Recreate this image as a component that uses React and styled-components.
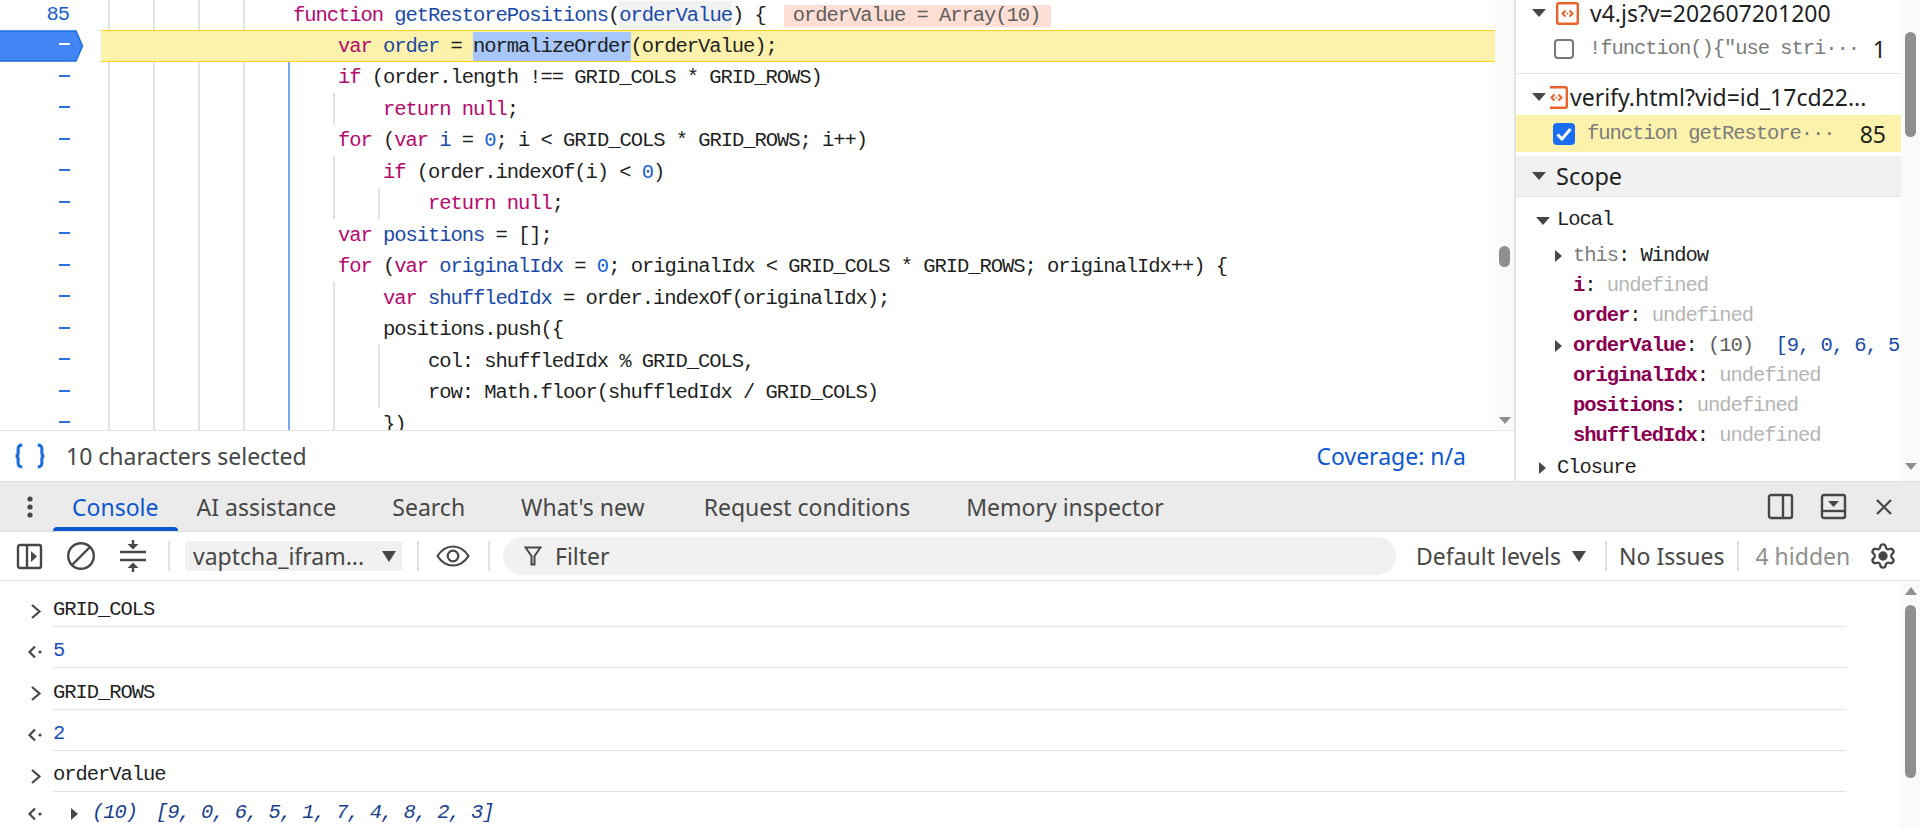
import React from "react";
import styled, { createGlobalStyle } from "styled-components";

const SANS = `"Noto Sans", "Open Sans", sans-serif`;
const MONO_FONT = `font: 20.5px/1 "Liberation Mono", monospace; letter-spacing: -1.05px;`;

const Global = createGlobalStyle`
  html, body { margin: 0; padding: 0; background: #fff; overflow: hidden; }
  * { box-sizing: border-box; }
`;

const Page = styled.div`
  width: 1920px; height: 828px; display: flex; flex-direction: column; overflow: hidden;
  font-family: ${SANS}; color: #1f1f1f; background: #fff;
`;
const Top = styled.div`display: flex; height: 481px; flex: none;`;
const SourcePane = styled.div`
  width: 1516px; flex: none; display: flex; flex-direction: column;
  border-right: 2px solid #e3e3e3;
`;
const CodeArea = styled.div`
  height: 431px; flex: none; display: flex; overflow: hidden; border-bottom: 1.5px solid #e3e3e3;
`;
const CodeList = styled.div`flex: 1; min-width: 0; overflow: hidden;`;
const Row = styled.div`
  display: flex; height: ${p => p.$first ? 30 : 31.5}px; white-space: pre;
  ${MONO_FONT} color: #1f1f1f;
`;
const Gutter = styled.div`
  position: relative; width: 101px; flex: none; display: flex; align-items: center; justify-content: flex-end;
  padding-right: 32px; color: #1a5fd0;
`;
const Dash = styled.span`
  position: relative; width: 11px; height: 2px; background: ${p => p.$on ? "#fff" : "#2b6fe0"};
  margin-top: -3px; margin-right: -1px;
`;
const Marker = styled.svg`position: absolute; left: 0; top: -0.5px;`;
const LineBody = styled.div`
  flex: 1; display: flex; align-items: stretch; padding-left: 7px; min-width: 0;
  ${p => p.$current && `
    background: #fdf2ab; border-top: 1.5px solid #fcd116; border-bottom: 1.5px solid #fcd116;
  `}
`;
const Indent = styled.span`
  width: 45px; flex: none; border-left: 2px solid ${p => p.$hidden ? "transparent" : p.$blue ? "#7ba7f7" : "#e3e3e3"};
`;
const Code = styled.span`align-self: center; padding: 2px 0 0 5px;`;
const Kw = styled.span`color: #b5086e;`;
const Def = styled.span`color: #1a4aa8;`;
const Num = styled.span`color: #1a62d6;`;
const ParamMark = styled.span`background: #f1f1f1; color: #1a4aa8; padding: 3px 0;`;
const Sel = styled.span`background: #a8c7fa; padding: 3px 0;`;
const InlineValue = styled.span`
  background: #ffdfd5; color: #5e5e5e; margin-left: 18px; padding: 2px 11px 2px 9px; display: inline-block; line-height: 18px;
`;

const ScrollTrack = styled.div`
  width: 19px; flex: none; background: #fafafa; display: flex; flex-direction: column; align-items: center;
`;
const Thumb = styled.div`
  width: 11px; height: ${p => p.$h}px; margin-top: ${p => p.$top}px; border-radius: 6px; background: #8f8f8f; flex: none;
`;
const DownArrow = styled.div`
  width: 0; height: 0; border-left: 6px solid transparent; border-right: 6px solid transparent;
  border-top: 7px solid #8f8f8f; margin-top: ${p => p.$top}px; flex: none;
`;
const UpArrow = styled.div`
  width: 0; height: 0; border-left: 6px solid transparent; border-right: 6px solid transparent;
  border-bottom: 8px solid #8f8f8f; margin-top: ${p => p.$top}px; flex: none;
`;

const StatusBar = styled.div`
  height: 50px; display: flex; align-items: center; padding: 0 48px 0 14px; font-size: 23px; color: #474747;
`;
const StatusText = styled.span`margin-left: 20px;`;
const CoverageLink = styled.span`margin-left: auto; color: #0b57d0;`;

const Sidebar = styled.div`flex: 1; min-width: 0; display: flex; overflow: hidden;`;
const SideBody = styled.div`flex: 1; min-width: 0; overflow: hidden;`;
const FileGroup = styled.div`
  ${p => p.$divided && `padding-bottom: 6px; border-bottom: 1.5px solid #e3e3e3;`}
`;
const FileRow = styled.div`
  display: flex; align-items: center; height: ${p => p.$h}px; padding: ${p => p.$pt || 0}px 0 ${p => p.$pb || 0}px 16px;
  font-size: 23px; line-height: 24px; color: #1f1f1f; white-space: nowrap;
`;
const FileName = styled.span`margin-left: ${p => p.$gap}px;`;
const TriGap = styled.span`width: ${p => p.$w}px; flex: none;`;
const Tri = styled.span`
  display: inline-block; flex: none; width: 0; height: 0;
  ${p => p.$right
    ? `border-top: 6px solid transparent; border-bottom: 6px solid transparent; border-left: 7px solid #474747;`
    : `border-left: 7px solid transparent; border-right: 7px solid transparent; border-top: ${p.$tall ? 11 : 8}px solid #474747;`}
`;
const BpRow = styled.div`
  display: flex; align-items: center; height: 37px; padding: 0 15px 0 ${p => p.$pl}px;
  background: ${p => p.$hit ? "#fdf2ab" : "transparent"};
`;
const Check = styled.span`
  width: ${p => p.$on ? 22 : 20}px; height: ${p => p.$on ? 22 : 20}px; flex: none; border-radius: 4px;
  border: ${p => p.$on ? "none" : "2px solid #777"}; background: ${p => p.$on ? "#1a6cf0" : "#fff"};
  display: flex; align-items: center; justify-content: center;
`;
const BpCode = styled.span`
  ${MONO_FONT} color: #7c7c7c; margin-left: ${p => p.$gap}px; flex: 1; white-space: pre; padding-top: 2px;
`;
const BpLine = styled.span`font-size: 23px; color: #1f1f1f;`;
const ScopeHeader = styled.div`
  margin-top: 4px; height: 41px; background: #f1f1f1; border-bottom: 1.5px solid #e3e3e3;
  display: flex; align-items: center; padding-left: 16px; font-size: 23.5px;
`;
const ScopeTitle = styled.span`margin-left: 10px;`;
const TreeHead = styled.div`
  display: flex; align-items: center; height: ${p => p.$h}px; padding-left: ${p => p.$pl}px;
  padding-top: ${p => p.$pt || 0}px; padding-bottom: ${p => p.$pb || 0}px;
  ${MONO_FONT} color: #1f1f1f; white-space: pre;
`;
const TreeLabel = styled.span`margin-left: ${p => p.$gap}px;`;
const TreeRow = styled.div`
  display: flex; align-items: center; height: 30px; padding-left: ${p => p.$arrow ? 0 : 57}px; padding-top: 2px;
  ${MONO_FONT} white-space: pre; color: #1f1f1f;
`;
const ArrowSlot = styled.span`width: 57px; flex: none; display: flex; justify-content: flex-end; padding-right: 11px;`;
const Prop = styled.span`color: ${p => p.$proto ? "#7c7c7c" : "#8a0050"}; font-weight: ${p => p.$proto ? 400 : 700};`;
const Muted = styled.span`color: #b5b5b5;`;
const Clip = styled.span`color: #5e5e5e;`;

const Drawer = styled.div`flex: 1; min-height: 0; display: flex; flex-direction: column; border-top: 1.5px solid #dedede;`;
const TabBar = styled.div`
  height: 50px; flex: none; background: #ebebeb; border-bottom: 1.5px solid #e0e0e0; display: flex; align-items: stretch; padding-left: 21px;
  font-size: 23px; color: #474747;
`;
const DotsBtn = styled.span`width: 18px; flex: none; display: flex; align-items: center; justify-content: center;`;
const Tab = styled.span`
  position: relative; display: flex; align-items: center; margin-left: ${p => p.$ml}px; white-space: nowrap;
  color: ${p => p.$on ? "#0b57d0" : "#474747"};
  ${p => p.$on && `&::after { content: ""; position: absolute; left: -19px; right: -19px; bottom: 0; height: 4px; background: #0b57d0; border-radius: 4px 4px 0 0; }`}
`;
const TabTools = styled.div`margin-left: auto; display: flex; align-items: center; gap: 26px; padding-right: 26px;`;
const Toolbar = styled.div`
  height: 49px; flex: none; display: flex; align-items: center; border-bottom: 1.5px solid #e3e3e3; padding-left: 16px;
  font-size: 23px; color: #474747; white-space: nowrap;
`;
const ToolIcon = styled.svg`flex: none; margin-left: ${p => p.$ml || 0}px;`;
const Sep = styled.span`width: 2px; height: 30px; background: #e3e3e3; flex: none; margin: 0 ${p => p.$r}px 0 ${p => p.$l}px;`;
const ContextSelect = styled.div`
  width: 217px; height: 30px; background: #f1f1f1; border-radius: 4px; display: flex; align-items: center; justify-content: space-between;
  padding: 0 6px 0 8px; flex: none;
`;
const FilterPill = styled.div`
  width: 893px; height: 38px; background: #f1f1f1; border-radius: 19px; display: flex; align-items: center; padding-left: 21px; flex: none;
`;
const FilterText = styled.span`margin-left: 13px;`;
const Levels = styled.span`margin-left: 20px; display: flex; align-items: center; gap: 11px;`;
const Hidden = styled.span`color: #8f8f8f;`;
const ConsoleArea = styled.div`flex: 1; min-height: 0; display: flex; overflow: hidden;`;
const ConsoleList = styled.div`width: 1846px; flex: none; overflow: hidden;`;
const ConsoleSpacer = styled.div`flex: 1;`;
const ConsoleRow = styled.div`
  display: flex; height: ${p => p.$h}px; ${MONO_FONT} white-space: pre;
`;
const ConsoleIcon = styled.span`
  width: 53px; flex: none; display: flex; align-items: center; padding-left: 30px; padding-top: ${p => p.$pt}px;
`;
const ConsoleBody = styled.div`
  flex: 1; display: flex; align-items: center; padding-top: ${p => p.$pt}px;
  border-bottom: ${p => p.$last ? "none" : "1.5px solid #e3e3e3"}; color: ${p => p.$value ? "#1a4fb5" : "#1f1f1f"};
`;
const ObjTri = styled.span`margin: 0 14px 0 18px; display: flex;`;
const ItalicBlue = styled.span`font-style: italic; color: #1a3f8f;`;
const ArrayText = styled.span`font-style: italic; color: #1a3f8f; margin-left: 19px;`;

const FileIcon = ({ clip }) => (
  <svg width={clip ? 18 : 23} height="23" viewBox={clip ? "5 0 18 23" : "0 0 23 23"} style={{ flex: "none" }}>
    <rect x="1.2" y="1.2" width="20.6" height="20.6" rx="1.5" fill="#fff" stroke="#e8622a" strokeWidth="2.4" />
    <path d="M9.5 8.5 6.5 11.5l3 3M13.5 8.5l3 3-3 3" fill="none" stroke="#e8622a" strokeWidth="2" />
    <circle cx="11.5" cy="11.5" r="1" fill="#e8622a" />
  </svg>
);
const Prompt = () => (
  <svg width="12" height="17" viewBox="0 0 12 17"><path d="M2 2l7.5 6.500L2 15" fill="none" stroke="#474747" strokeWidth="2.200" /></svg>
);
const Result = () => (
  <svg width="16" height="16" viewBox="0 0 16 16" style={{ marginLeft: -3 }}>
    <path d="M8 2.500 2.500 8 8 13.500" fill="none" stroke="#474747" strokeWidth="2.200" />
    <circle cx="13" cy="8" r="1.600" fill="#474747" />
  </svg>
);

const kinds = { k: Kw, d: Def, n: Num, p: ParamMark, s: Sel };
const T = ({ c }) => {
  const parts = c.split(/(\{\{\w:.*?\}\})/g);
  return parts.map((part, i) => {
    const m = part.match(/^\{\{(\w):(.*)\}\}$/);
    if (!m) return <React.Fragment key={i}>{part}</React.Fragment>;
    const C = kinds[m[1]];
    return <C key={i}>{m[2]}</C>;
  });
};

const lines = [
  { d: 4, c: "{{k:function}} {{d:getRestorePositions}}({{p:orderValue}}) {", num: "85" },
  { d: 5, c: "{{k:var}} {{d:order}} = {{s:normalizeOrder}}(orderValue);", cur: true },
  { d: 5, c: "{{k:if}} (order.length !== GRID_COLS * GRID_ROWS)" },
  { d: 6, c: "{{k:return}} {{k:null}};" },
  { d: 5, c: "{{k:for}} ({{k:var}} {{d:i}} = {{n:0}}; i < GRID_COLS * GRID_ROWS; i++)" },
  { d: 6, c: "{{k:if}} (order.indexOf(i) < {{n:0}})" },
  { d: 7, c: "{{k:return}} {{k:null}};" },
  { d: 5, c: "{{k:var}} {{d:positions}} = [];" },
  { d: 5, c: "{{k:for}} ({{k:var}} {{d:originalIdx}} = {{n:0}}; originalIdx < GRID_COLS * GRID_ROWS; originalIdx++) {" },
  { d: 6, c: "{{k:var}} {{d:shuffledIdx}} = order.indexOf(originalIdx);" },
  { d: 6, c: "positions.push({" },
  { d: 7, c: "col: shuffledIdx % GRID_COLS," },
  { d: 7, c: "row: Math.floor(shuffledIdx / GRID_COLS)" },
  { d: 6, c: "})" },
];

const tree = [
  { k: "this", proto: true, v: <span>Window</span>, arrow: true },
  { k: "i", v: <Muted>undefined</Muted> },
  { k: "order", v: <Muted>undefined</Muted> },
  { k: "orderValue", arrow: true, v: <span><Clip>(10)</Clip>  <Def>[9, 0, 6, 5</Def></span> },
  { k: "originalIdx", v: <Muted>undefined</Muted> },
  { k: "positions", v: <Muted>undefined</Muted> },
  { k: "shuffledIdx", v: <Muted>undefined</Muted> },
];

const I = { fill: "none", stroke: "#474747", strokeWidth: 2 };

export default function App() {
  return (
    <Page>
      <Global />
      <Top>
        <SourcePane>
          <CodeArea>
            <CodeList>
              {lines.map((l, i) => (
                <Row key={i} $first={i === 0}>
                  <Gutter>
                    {l.cur && (
                      <Marker width="84" height="32" viewBox="0 0 84 32">
                        <path d="M-2 1H76L82.5 16 76 31H-2Z" fill="#4285f4" stroke="#1a6ee0" strokeWidth="1.5" />
                      </Marker>
                    )}
                    {l.num ? <span>{l.num}</span> : <Dash $on={l.cur} />}
                  </Gutter>
                  <LineBody $current={l.cur}>
                    {Array.from({ length: l.d }).map((_, k) => (
                      <Indent key={k} $hidden={l.cur} $blue={k === 4 && i >= 2} />
                    ))}
                    <Code>
                      <T c={l.c} />
                      {l.num && <InlineValue>orderValue = Array(10)</InlineValue>}
                    </Code>
                  </LineBody>
                </Row>
              ))}
            </CodeList>
            <ScrollTrack>
              <Thumb $top={246} $h={21} />
              <DownArrow $top={150} />
            </ScrollTrack>
          </CodeArea>
          <StatusBar>
            <svg width="32" height="26" viewBox="0 0 31 24" style={{ flex: "none" }}>
              <path d="M8 1.500C4.500 1.500 4 3 4 5.500V9c0 2-1 3-2.500 3 1.500 0 2.500 1 2.500 3v3.500c0 2.500.5 4 4 4M23 1.500c3.500 0 4 1.500 4 4V9c0 2 1 3 2.500 3-1.500 0-2.500 1-2.500 3v3.500c0 2.500-.5 4-4 4" fill="none" stroke="#1a6ee0" strokeWidth="3" />
            </svg>
            <StatusText>10 characters selected</StatusText>
            <CoverageLink>Coverage: n/a</CoverageLink>
          </StatusBar>
        </SourcePane>
        <Sidebar>
          <SideBody>
            <FileGroup $divided>
              <FileRow $h={30} $pb={4}>
                <Tri />
                <TriGap $w={10} />
                <FileIcon />
                <FileName $gap={11}>v4.js?v=202607201200</FileName>
              </FileRow>
              <BpRow $pl={38}>
                <Check />
                <BpCode $gap={15}>!function(){"{"}"use stri···</BpCode>
                <BpLine>1</BpLine>
              </BpRow>
            </FileGroup>
            <FileGroup>
              <FileRow $h={41} $pt={5}>
                <Tri />
                <TriGap $w={4} />
                <FileIcon clip />
                <FileName $gap={2}>verify.html?vid=id_17cd22...</FileName>
              </FileRow>
              <BpRow $pl={37} $hit>
                <Check $on>
                  <svg width="16" height="14" viewBox="0 0 16 14"><path d="M1.500 7.500 6 12 14.500 2" fill="none" stroke="#fff" strokeWidth="3" /></svg>
                </Check>
                <BpCode $gap={12}>function getRestore···</BpCode>
                <BpLine>85</BpLine>
              </BpRow>
            </FileGroup>
            <ScopeHeader>
              <Tri />
              <ScopeTitle>Scope</ScopeTitle>
            </ScopeHeader>
            <TreeHead $h={43} $pl={20} $pt={9} $pb={5}>
              <Tri />
              <TreeLabel $gap={7}>Local</TreeLabel>
            </TreeHead>
            {tree.map(t => (
              <TreeRow key={t.k} $arrow={t.arrow}>
                {t.arrow && <ArrowSlot><Tri $right /></ArrowSlot>}
                <Prop $proto={t.proto}>{t.k}</Prop>: {t.v}
              </TreeRow>
            ))}
            <TreeHead $h={36} $pl={23}>
              <Tri $right />
              <TreeLabel $gap={11}>Closure</TreeLabel>
            </TreeHead>
          </SideBody>
          <ScrollTrack>
            <Thumb $top={32} $h={105} />
            <DownArrow $top={326} />
          </ScrollTrack>
        </Sidebar>
      </Top>
      <Drawer>
        <TabBar>
          <DotsBtn>
            <svg width="6" height="24" viewBox="0 0 6 24"><circle cx="3" cy="4" r="2.600" fill="#474747" /><circle cx="3" cy="12" r="2.600" fill="#474747" /><circle cx="3" cy="20" r="2.600" fill="#474747" /></svg>
          </DotsBtn>
          <Tab $on $ml={33}>Console</Tab>
          <Tab $ml={38}>AI assistance</Tab>
          <Tab $ml={56}>Search</Tab>
          <Tab $ml={56}>What's new</Tab>
          <Tab $ml={59}>Request conditions</Tab>
          <Tab $ml={56}>Memory inspector</Tab>
          <TabTools>
            <svg width="27" height="27" viewBox="0 0 27 27"><rect x="2" y="2" width="23" height="23" rx="2" {...I} strokeWidth="2.400" /><path d="M16 2v23" {...I} strokeWidth="2.400" /></svg>
            <svg width="27" height="27" viewBox="0 0 27 27"><rect x="2" y="2" width="23" height="23" rx="2" {...I} strokeWidth="2.400" /><path d="M2 18h23" {...I} strokeWidth="2.400" /><path d="M8 8h11l-5.500 6z" fill="#474747" /></svg>
            <svg width="18" height="18" viewBox="0 0 18 18" style={{ marginRight: 1, marginLeft: 2 }}><path d="M2 2l14 14M16 2 2 16" {...I} strokeWidth="2.200" /></svg>
          </TabTools>
        </TabBar>
        <Toolbar>
          <ToolIcon width="27" height="27" viewBox="0 0 27 27">
            <rect x="2" y="2" width="23" height="23" rx="2" {...I} strokeWidth="2.400" />
            <path d="M11 2v23" {...I} strokeWidth="2.400" />
            <path d="M15 8l6 5.500-6 5.500z" fill="#474747" />
          </ToolIcon>
          <ToolIcon $ml={24} width="28" height="28" viewBox="0 0 28 28">
            <circle cx="14" cy="14" r="12.800" {...I} strokeWidth="2.400" />
            <path d="M5.500 22.500 22.500 5.500" {...I} strokeWidth="2.400" />
          </ToolIcon>
          <ToolIcon $ml={24} width="28" height="34" viewBox="0 0 28 34">
            <path d="M1 13h26M1 21h26" {...I} strokeWidth="2.400" />
            <path d="M14 1v5M14 33v-5" {...I} strokeWidth="2.400" />
            <path d="M8.500 5l5.500 5.500L19.500 5zM8.500 29l5.500-5.500 5.500 5.500z" fill="#474747" />
          </ToolIcon>
          <Sep $l={21} $r={15} />
          <ContextSelect>
            <span>vaptcha_ifram...</span>
            <Tri $tall />
          </ContextSelect>
          <Sep $l={15} $r={17} />
          <ToolIcon width="34" height="24" viewBox="0 0 34 24">
            <path d="M1.500 12C6 5 11 2.500 17 2.500S28 5 32.500 12C28 19 23 21.500 17 21.500S6 19 1.500 12Z" {...I} strokeWidth="2.200" />
            <circle cx="17" cy="12" r="5.300" {...I} strokeWidth="2.200" />
          </ToolIcon>
          <Sep $l={18} $r={13} />
          <FilterPill>
            <svg width="18" height="20" viewBox="0 0 18 20"><path d="M1.500 1.500h15L10.500 10v8.500h-3V10z" {...I} /></svg>
            <FilterText>Filter</FilterText>
          </FilterPill>
          <Levels>Default levels <Tri $tall /></Levels>
          <Sep $l={19} $r={12} />
          <span>No Issues</span>
          <Sep $l={13} $r={16} />
          <Hidden>4 hidden</Hidden>
          <ToolIcon $ml={19} width="28" height="28" viewBox="0 0 24 24" fill="none" stroke="#474747" strokeWidth="2">
            <path d="M9.671 4.136a2.340 2.340 0 0 1 4.659 0 2.340 2.340 0 0 0 3.319 1.915 2.340 2.340 0 0 1 2.330 4.033 2.340 2.340 0 0 0 0 3.831 2.340 2.340 0 0 1-2.330 4.033 2.340 2.340 0 0 0-3.319 1.915 2.340 2.340 0 0 1-4.659 0 2.340 2.340 0 0 0-3.320-1.915 2.340 2.340 0 0 1-2.330-4.033 2.340 2.340 0 0 0 0-3.831A2.340 2.340 0 0 1 6.351 6.051a2.340 2.340 0 0 0 3.320-1.915" />
            <circle cx="12" cy="12" r="3" fill="#474747" />
          </ToolIcon>
        </Toolbar>
        <ConsoleArea>
          <ConsoleList>
            <ConsoleRow $h={46}><ConsoleIcon $pt={14}><Prompt /></ConsoleIcon><ConsoleBody $pt={14}>GRID_COLS</ConsoleBody></ConsoleRow>
            <ConsoleRow $h={41.3}><ConsoleIcon $pt={9}><Result /></ConsoleIcon><ConsoleBody $pt={9} $value>5</ConsoleBody></ConsoleRow>
            <ConsoleRow $h={41.3}><ConsoleIcon $pt={9}><Prompt /></ConsoleIcon><ConsoleBody $pt={9}>GRID_ROWS</ConsoleBody></ConsoleRow>
            <ConsoleRow $h={41.3}><ConsoleIcon $pt={9}><Result /></ConsoleIcon><ConsoleBody $pt={9} $value>2</ConsoleBody></ConsoleRow>
            <ConsoleRow $h={41.3}><ConsoleIcon $pt={9}><Prompt /></ConsoleIcon><ConsoleBody $pt={9}>orderValue</ConsoleBody></ConsoleRow>
            <ConsoleRow $h={36}>
              <ConsoleIcon $pt={7}><Result /></ConsoleIcon>
              <ConsoleBody $pt={7} $last>
                <ObjTri><Tri $right /></ObjTri>
                <ItalicBlue>(10)</ItalicBlue>
                <ArrayText>[9, 0, 6, 5, 1, 7, 4, 8, 2, 3]</ArrayText>
              </ConsoleBody>
            </ConsoleRow>
          </ConsoleList>
          <ConsoleSpacer />
          <ScrollTrack>
            <UpArrow $top={6} />
            <Thumb $top={10} $h={173} />
          </ScrollTrack>
        </ConsoleArea>
      </Drawer>
    </Page>
  );
}
